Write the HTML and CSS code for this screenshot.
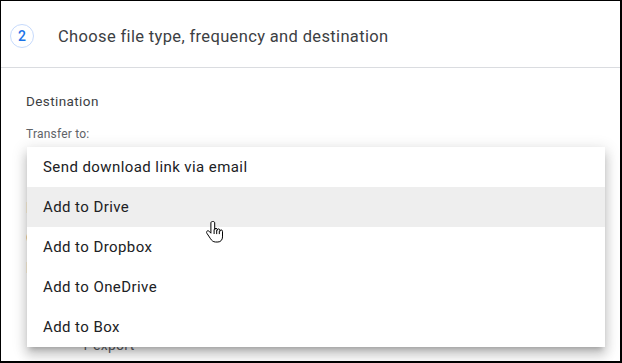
FILE: index.html
```html
<!DOCTYPE html>
<html lang="en">
<head>
    <meta charset="UTF-8">
    <title>Choose file type, frequency and destination</title>
    <link rel="stylesheet" href="styles.css">
</head>
<body>
    <div class="frame">
        <div class="step-header">
            <span class="step-num">2</span>
            <h2>Choose file type, frequency and destination</h2>
        </div>

        <div class="section">
            <h3>Destination</h3>
            <p class="field-label">Transfer to:</p>
            <div class="select-box"></div>

            <!-- 메뉴 뒤에 가려진 내용 -->
            <p class="hidden-line first">Frequency:</p>
            <p class="hidden-line">Once</p>
            <p class="hidden-line">Every 2 months for 1 year</p>
            <p class="sub-line">1 export</p>
        </div>

        <ul class="menu">
            <li>Send download link via email</li>
            <li class="active">Add to Drive</li>
            <li>Add to Dropbox</li>
            <li>Add to OneDrive</li>
            <li>Add to Box</li>
        </ul>

        <svg class="cursor" width="18" height="25" viewBox="0 0 18 25">
            <path d="M6.5 1.5c-1 0-1.6.7-1.6 1.5v10.2l-1.7-1.9c-.7-.7-1.8-.7-2.3 0-.5.6-.4 1.4 0 2l3.6 5.4c1 1.6 2.600 3.3 5 3.3h2.4c2.8 0 4.6-2.3 4.6-5.1v-5.6c0-.8-.6-1.4-1.3-1.4-.8 0-1.3.6-1.3 1.4v-1c0-.8-.6-1.4-1.3-1.4-.8 0-1.3.6-1.3 1.4v-.6c0-.8-.6-1.4-1.3-1.4-.8 0-1.3.6-1.3 1.4V3c0-.8-.5-1.5-1.5-1.5z" fill="#fff" stroke="#000" stroke-width="1" stroke-linejoin="round"/>
            <path d="M8.1 9.5v4.5M10.7 10.1v4M13.3 11.1v3" stroke="#000" stroke-width="1" fill="none"/>
        </svg>
    </div>
</body>
</html>
```

FILE: styles.css
```css
body {
    margin: 0;
    padding: 0;
    background-color: #fff;
    font-family: Roboto, 'Open Sans', sans-serif;
}

.frame {
    position: relative;
    width: 622px;
    height: 363px;
    box-sizing: border-box;
    border-style: solid;
    border-color: #000;
    border-width: 1px 2px 2px 1px;
    overflow: hidden;
    background-color: #fff;
}

.step-header {
    display: flex;
    align-items: center;
    height: 62px;
    padding: 4px 0 0 9px;
    border-bottom: 1px solid #dadce0;
}

.step-num {
    display: flex;
    align-items: center;
    justify-content: center;
    width: 22px;
    height: 22px;
    border: 1px solid #c6dafc;
    border-radius: 50%;
    color: #1a73e8;
    font-size: 14px;
    font-weight: 500;
}

h2 {
    margin: 0 0 0 24px;
    color: #3c4043;
    font-size: 16.5px;
    font-weight: 400;
    letter-spacing: 0.35px;
}

.section {
    padding: 23px 25px 0;
}

h3 {
    margin: 0;
    color: #3c4043;
    font-size: 13.5px;
    font-weight: 400;
    line-height: 20px;
    letter-spacing: 0.4px;
}

.field-label {
    margin: 15px 0 0;
    color: #5f6368;
    font-size: 12px;
    line-height: 16px;
    letter-spacing: 0.2px;
}

.select-box {
    height: 40px;
    margin-top: 4px;
}

.hidden-line {
    width: 3px;
    margin: 0;
    padding: 10px 0 0;
    overflow: hidden;
    white-space: nowrap;
    color: #5f6368;
    font-size: 14px;
    line-height: 20px;
}

.hidden-line.first {
    padding-top: 12px;
}

.sub-line {
    margin: 0;
    padding: 57px 0 0 55px;
    color: #5f6368;
    font-size: 14px;
    line-height: 20px;
    letter-spacing: 0.3px;
}

.menu {
    position: absolute;
    top: 146px;
    left: 26px;
    width: 578px;
    margin: 0;
    padding: 0;
    list-style: none;
    background-color: #fff;
    box-shadow: 0 5px 5px -3px rgba(0,0,0,0.2), 0 8px 10px 1px rgba(0,0,0,0.14), 0 3px 14px 2px rgba(0,0,0,0.12);
}

.menu li {
    height: 40px;
    padding-left: 16px;
    color: #202124;
    font-size: 15px;
    line-height: 40px;
    letter-spacing: 0.42px;
}

.menu li.active {
    background-color: #eeeeee;
}

.cursor {
    position: absolute;
    left: 205px;
    top: 219px;
}
```
